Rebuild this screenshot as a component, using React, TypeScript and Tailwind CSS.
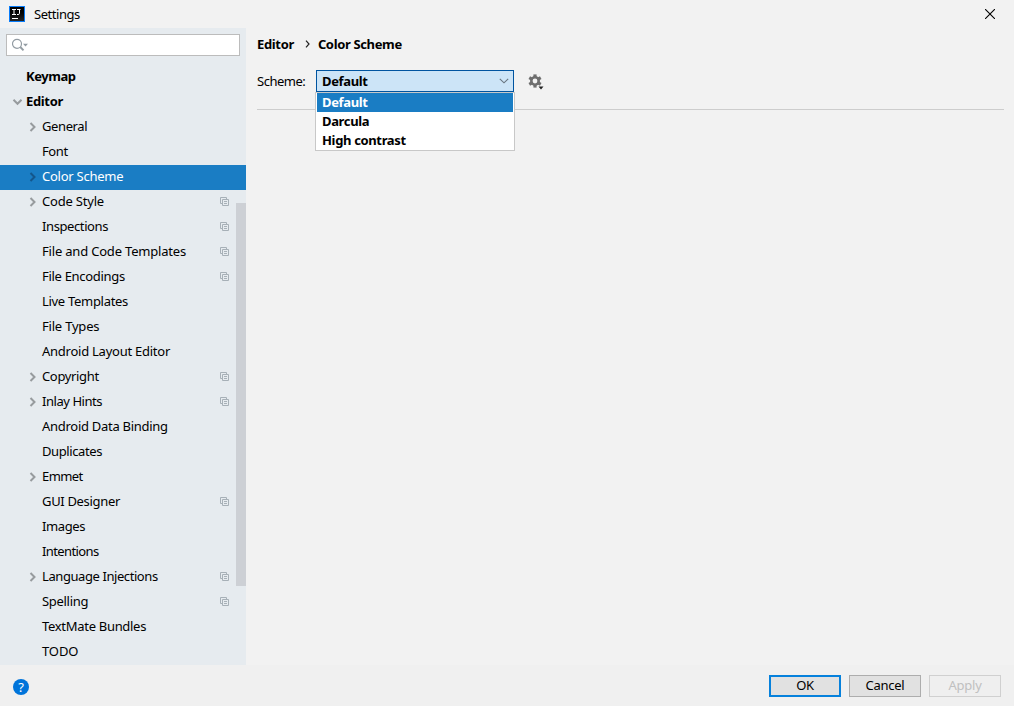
import clsx from 'clsx';

type TreeItem = {
  label: string;
  tracking: string;
  root?: boolean;
  arrow?: 'right' | 'down';
  copy?: boolean;
  selected?: boolean;
};

const items: TreeItem[] = [
  { label: 'Keymap', tracking: 'tracking-[-0.45px]', root: true },
  { label: 'Editor', tracking: 'tracking-[-0.35px]', root: true, arrow: 'down' },
  { label: 'General', tracking: 'tracking-[-0.4px]', arrow: 'right' },
  { label: 'Font', tracking: 'tracking-[-0.4px]' },
  { label: 'Color Scheme', tracking: 'tracking-[-0.25px]', arrow: 'right', selected: true },
  { label: 'Code Style', tracking: 'tracking-[-0.2px]', arrow: 'right', copy: true },
  { label: 'Inspections', tracking: 'tracking-[-0.4px]', copy: true },
  { label: 'File and Code Templates', tracking: 'tracking-[-0.19px]', copy: true },
  { label: 'File Encodings', tracking: 'tracking-[-0.3px]', copy: true },
  { label: 'Live Templates', tracking: 'tracking-[-0.3px]' },
  { label: 'File Types', tracking: 'tracking-[-0.2px]' },
  { label: 'Android Layout Editor', tracking: 'tracking-[-0.25px]' },
  { label: 'Copyright', tracking: 'tracking-[-0.35px]', arrow: 'right', copy: true },
  { label: 'Inlay Hints', tracking: 'tracking-[-0.45px]', arrow: 'right', copy: true },
  { label: 'Android Data Binding', tracking: 'tracking-[-0.28px]' },
  { label: 'Duplicates', tracking: 'tracking-[-0.4px]' },
  { label: 'Emmet', tracking: 'tracking-[-0.6px]', arrow: 'right' },
  { label: 'GUI Designer', tracking: 'tracking-[-0.33px]', copy: true },
  { label: 'Images', tracking: 'tracking-[-0.4px]' },
  { label: 'Intentions', tracking: 'tracking-[-0.6px]' },
  { label: 'Language Injections', tracking: 'tracking-[-0.42px]', arrow: 'right', copy: true },
  { label: 'Spelling', tracking: 'tracking-[-0.3px]', copy: true },
  { label: 'TextMate Bundles', tracking: 'tracking-[-0.3px]' },
  { label: 'TODO', tracking: 'tracking-[-0.1px]' },
];

const schemes = ['Default', 'Darcula', 'High contrast'];

const Logo = () => (
  <div className="flex h-4 w-4 flex-col border border-[#087cfa] bg-linear-to-b from-black to-[#252525]">
    <svg width="14" height="14" viewBox="0 0 14 14" fill="none" stroke="white">
      <path d="M2 2.5h4M4 2.5v5M2 7.5h4M7 2.5h3.5M9.5 2v4.5q0 1-1.5 1H7M2 11.5h6" />
    </svg>
  </div>
);

const CopyIcon = () => (
  <svg className="shrink-0" width="9" height="9" viewBox="0 0 9 9" fill="none" stroke="#a7b0b7">
    <path d="M2.5 6.5h-2v-6h6v2M2.5 2.5h6v6h-6zM4 4.5h3M4 6.5h3" />
  </svg>
);

const Arrow = ({ dir, selected }: { dir: 'right' | 'down'; selected?: boolean }) => (
  <svg
    width="10"
    height="10"
    viewBox="0 0 10 10"
    fill="none"
    stroke={selected ? '#14568b' : '#979b9e'}
    strokeWidth="2"
  >
    <path d={dir === 'right' ? 'M2.5 1L6.5 5L2.5 9' : 'M1.5 2.8L5.5 6.8L9.5 2.8'} />
  </svg>
);

const TreeRow = ({ item }: { item: TreeItem }) => (
  <div
    className={clsx(
      'flex h-[25px] items-center pb-0.5 pr-[17px]',
      item.root ? 'pl-3 font-bold' : 'pl-7',
      item.selected && 'bg-[#1a7dc4] text-white'
    )}
  >
    <div className="w-3.5 shrink-0">
      {item.arrow && <Arrow dir={item.arrow} selected={item.selected} />}
    </div>
    <span className={clsx('grow whitespace-nowrap pb-0.5', item.tracking)}>{item.label}</span>
    {item.copy && <CopyIcon />}
  </div>
);

const Sidebar = () => (
  <div className="relative w-[246px] shrink-0 bg-[#e6ebef] pt-1.5">
    <div className="mx-1.5 mb-[9px] flex h-[22px] items-center border border-[#bcbcbc] bg-white pl-[5px]">
      <svg width="18" height="14" viewBox="0 0 18 14" fill="none" stroke="#939ca3">
        <circle cx="5" cy="5.8" r="4.5" strokeWidth="1.2" />
        <path d="M8.3 9L11.5 12.3" strokeWidth="1.9" />
        <path d="M11 5.8h5L13.5 8.5z" fill="#939ca3" stroke="none" />
      </svg>
    </div>
    {items.map((item) => (
      <TreeRow key={item.label} item={item} />
    ))}
    <div className="absolute right-0 top-[175px] h-[383px] w-2.5 bg-[#cdd0d5]" />
  </div>
);

const SchemeSelect = () => (
  <div className="relative font-bold tracking-[-0.35px]">
    <div className="flex h-[22px] w-[198px] items-center justify-between border border-[#0054a0] bg-[#cce4f7] pl-[5px] pr-1">
      Default
      <svg width="10" height="6" viewBox="0 0 10 6" fill="none" stroke="#68747e" strokeWidth="1.1">
        <path d="M.8 .8L5 4.8L9.2 .8" />
      </svg>
    </div>
    <div className="absolute -left-px top-[22px] w-[200px] border border-[#c8c8c8] bg-white px-px">
      {schemes.map((scheme, i) => (
        <div
          key={scheme}
          className={clsx('flex h-[19px] items-center pb-0.5 pl-[5px]', i === 0 && 'bg-[#1a7dc4] text-white')}
        >
          {scheme}
        </div>
      ))}
    </div>
  </div>
);

const Gear = () => (
  <svg className="ml-3.5 mt-1" width="16" height="16" viewBox="0 0 16 16">
    <g fill="#6e6e6e">
      <path d="M5.4 .4h3.2v13.2H5.4z" />
      <path d="M5.4 .4h3.2v13.2H5.4z" transform="rotate(60 7 7)" />
      <path d="M5.4 .4h3.2v13.2H5.4z" transform="rotate(120 7 7)" />
      <circle cx="7" cy="7" r="5" />
    </g>
    <circle cx="7" cy="7" r="2.4" fill="#f2f2f2" />
    <path d="M10.5 12.5h5l-2.5 3z" fill="#222" />
  </svg>
);

const App = () => {
  return (
    <div className="flex h-[706px] w-[1014px] flex-col overflow-hidden bg-[#f2f2f2] font-['Noto_Sans',sans-serif] text-[13px] leading-[18px] text-black">
      <div className="flex h-7 shrink-0 items-center pl-[9px] pr-[19px]">
        <Logo />
        <span className="ml-[9px] grow tracking-[-0.45px]">Settings</span>
        <svg width="10" height="10" viewBox="0 0 10 10" stroke="black" strokeWidth="1.1">
          <path d="M0 0L10 10M10 0L0 10" />
        </svg>
      </div>
      <div className="flex h-[637px] shrink-0">
        <Sidebar />
        <div className="grow pl-[11px] pr-2.5 pt-[7px]">
          <div className="flex h-[18px] items-center font-bold tracking-[-0.35px]">
            <span>Editor</span>
            <svg className="ml-[11px] mr-2" width="5" height="8" viewBox="0 0 5 8" fill="none" stroke="#222" strokeWidth="1.2">
              <path d="M1 .7L4 4L1 7.3" />
            </svg>
            <span>Color Scheme</span>
          </div>
          <div className="mt-[17px] flex h-10 items-start border-b border-[#cdcdcd]">
            <span className="mt-0.5 w-[59px] tracking-[-0.5px]">Scheme:</span>
            <SchemeSelect />
            <Gear />
          </div>
        </div>
      </div>
      <div className="flex h-[41px] items-center bg-[#f0f0f0] px-[13px]">
        <div className="mt-[3px] flex h-4 w-4 items-center justify-center rounded-full bg-[#0074da] text-[13px] text-white">
          ?
        </div>
        <div className="mt-px flex grow justify-end gap-2 leading-[17px] tracking-[-0.25px]">
          <button className="h-[22px] w-[72px] border-2 border-[#0681dc] bg-[#e1e1e1] pb-px">OK</button>
          <button className="h-[22px] w-[72px] border border-[#adadad] bg-[#e1e1e1] pb-px">Cancel</button>
          <button className="h-[22px] w-[72px] border border-[#d0d0d0] bg-[#efefef] pb-px text-[#c0c0c0]">Apply</button>
        </div>
      </div>
    </div>
  );
};

export default App;
